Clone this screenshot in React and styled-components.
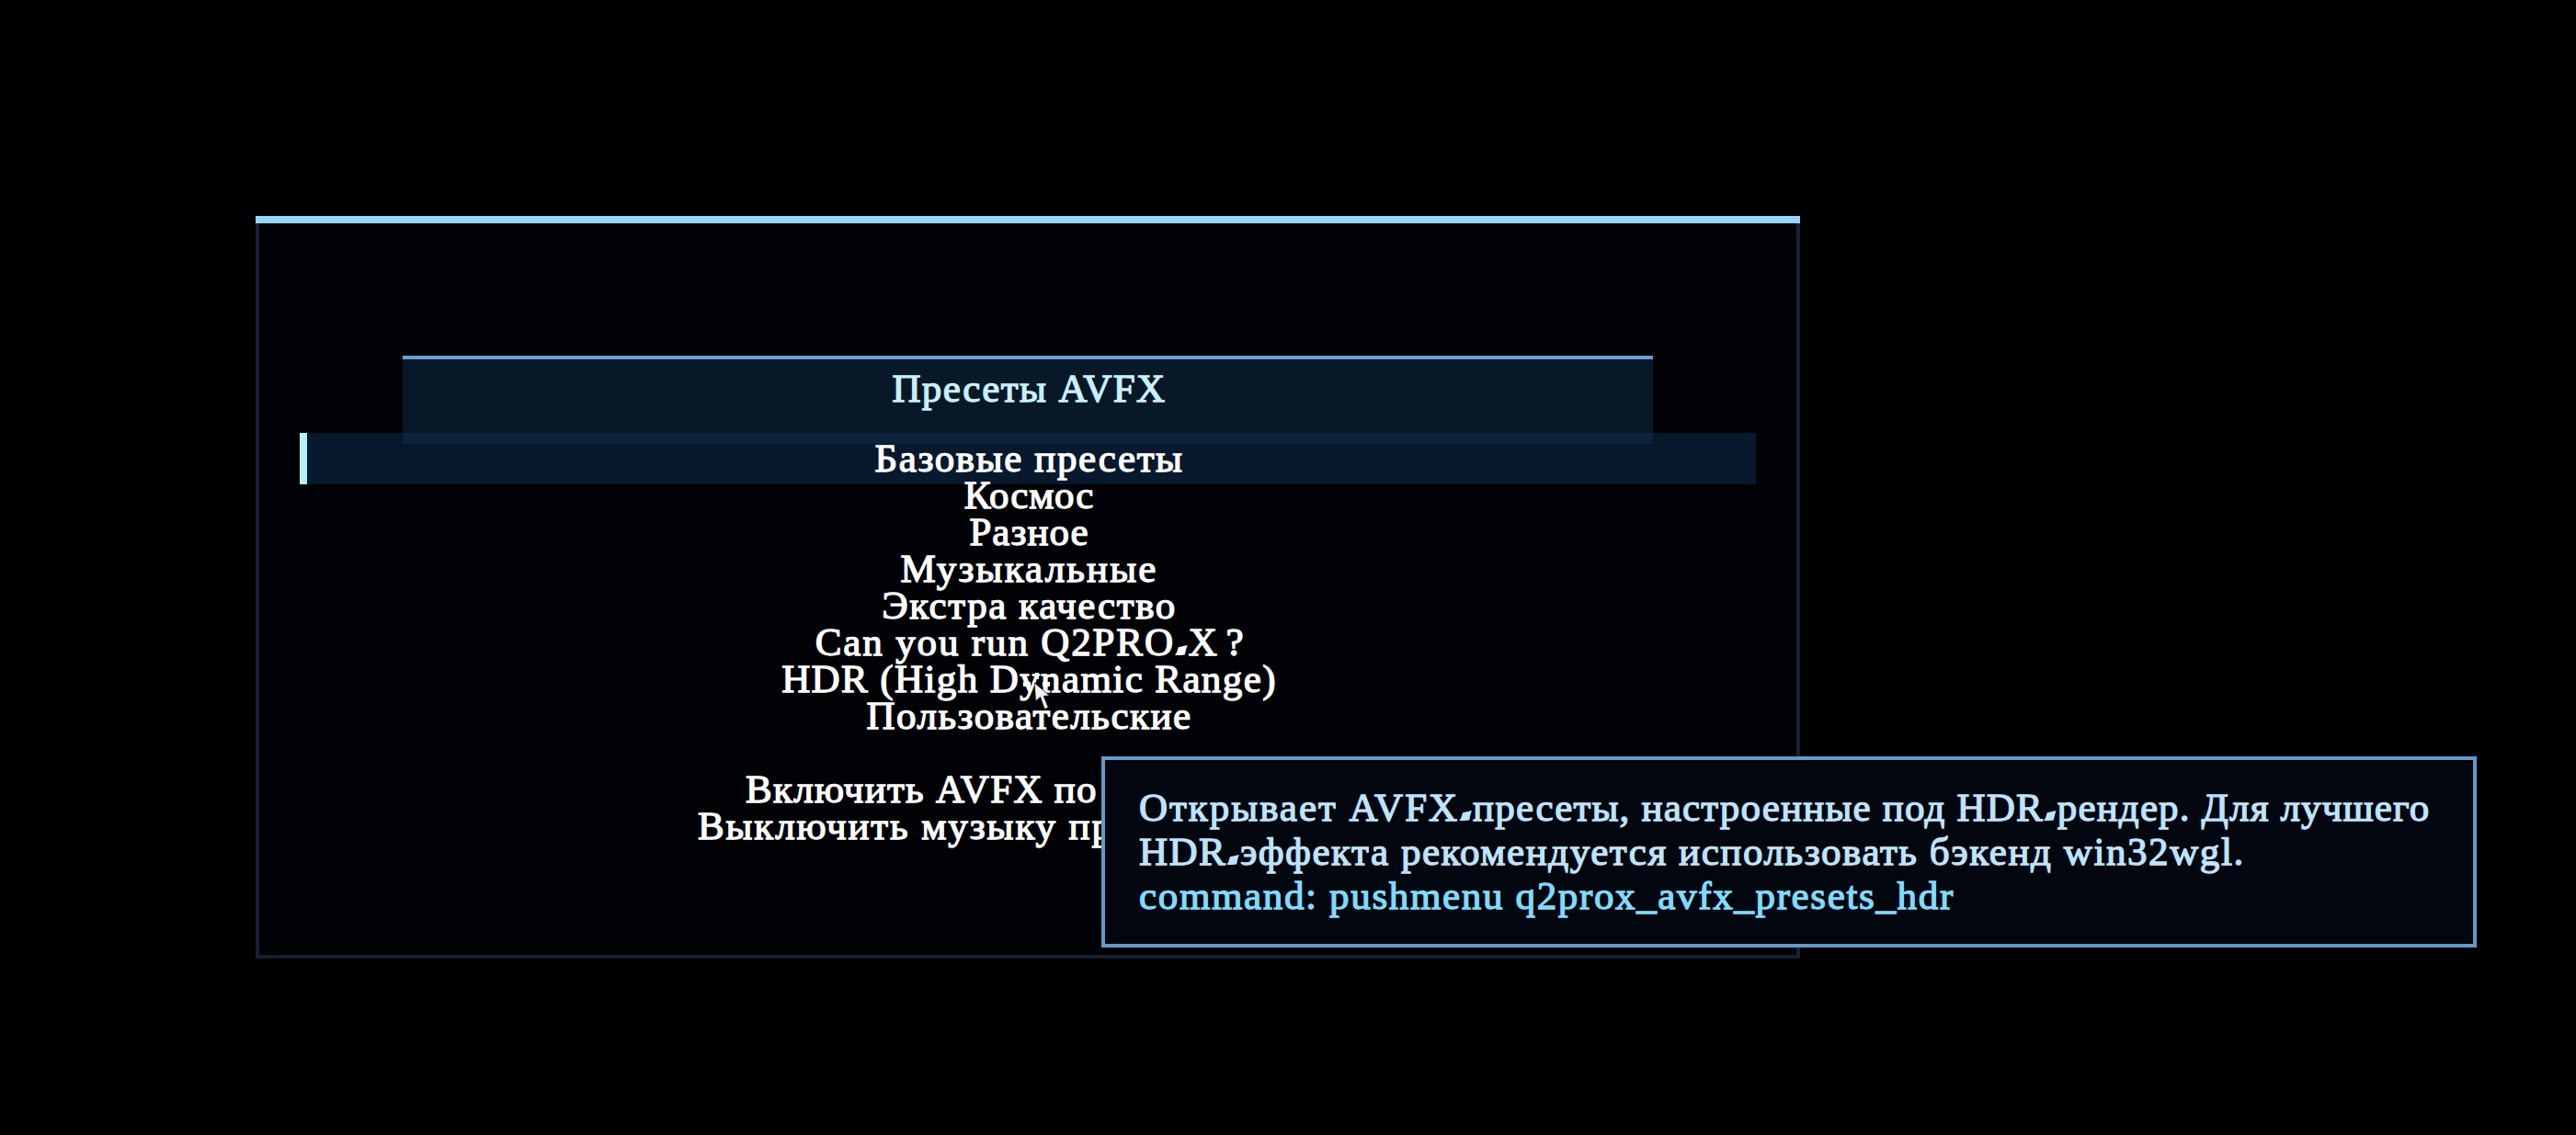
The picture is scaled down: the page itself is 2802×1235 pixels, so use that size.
import React from "react";
import styled, { createGlobalStyle, css } from "styled-components";

const GlobalStyle = createGlobalStyle`
  * {
    box-sizing: border-box;
  }
  body {
    margin: 0;
    background: #000;
    overflow: hidden;
  }
`;

const Page = styled.div`
  position: relative;
  width: 2802px;
  height: 1235px;
  padding: 235px 0 0 278px;
  background: #000;
  font-family: "Liberation Serif", "Times New Roman", serif;
  font-size: 43px;
  line-height: 40px;
  white-space: pre;
  -webkit-text-stroke: 1.3px currentColor;
`;

const Panel = styled.main`
  width: 1680px;
  border-top: 8px solid #97d3ff;
`;

const PanelBody = styled.div`
  display: flex;
  flex-direction: column;
  height: 800px;
  padding: 144px 44px 0;
  border: 4px solid #142239;
  border-top: 0;
  border-bottom-color: #14212f;
  background: #010206;
`;

const Header = styled.header`
  align-self: center;
  width: 1360px;
  height: 96px;
  margin-bottom: -12px;
  padding: 12px 0 0 3px;
  border-top: 4px solid #6a9fd0;
  background: #091826;
  color: #c8f0ff;
  text-align: center;
`;

const Menu = styled.ul`
  display: flex;
  flex-direction: column;
  margin: 0;
  padding: 8px 0 0;
  list-style: none;
  color: #fff;
`;

const Item = styled.li`
  display: flex;
  justify-content: center;
  height: 40px;
  padding-left: 3px;
  ${({ $selected }) =>
    $selected &&
    css`
      height: 56px;
      margin: -8px 0;
      padding: 8px 0 8px 3px;
      background: rgba(15, 46, 84, 0.5);
      box-shadow: inset 8px 0 #b8efff;
    `}
`;

const Label = styled.span`
  width: ${({ $width }) => ($width ? `${$width}px` : "auto")};
`;

const Text = styled.span`
  letter-spacing: ${({ $spacing }) => $spacing}px;
`;

// the menu font draws its hyphen as a slanted lozenge on the baseline
const HyphenBox = styled.span`
  display: inline-block;
  width: 14px;
  height: 11px;
  margin: 0 1px 0 0;
  overflow: hidden;
  background: currentColor;
  clip-path: polygon(0 96%, 14% 80%, 28% 20%, 100% 0, 92% 22%, 78% 94%, 30% 100%);
  line-height: 11px;
`;

const Hyphen = () => <HyphenBox>-</HyphenBox>;

const Tooltip = styled.aside`
  position: absolute;
  left: 1198px;
  top: 823px;
  width: 1496px;
  height: 208px;
  padding: 28px 37px;
  border: 4px solid #6499c8;
  background: #02060e;
  color: #bfe3ff;
  line-height: 48px;
`;

const TooltipLine = styled.div`
  height: 48px;
`;

const Command = styled(TooltipLine)`
  color: #80dbff;
`;

const Pointer = styled.svg`
  position: absolute;
  left: 1112px;
  top: 729px;
`;

const items = [
  { text: "Базовые пресеты", spacing: 1.6, selected: true },
  { text: "Космос", spacing: 0.7 },
  { text: "Разное", spacing: 1 },
  { text: "Музыкальные", spacing: 2.15 },
  { text: "Экстра качество", spacing: 1.6 },
  { text: "Can you run Q2PRO", spacing: 1.85, tail: "X ?", tailSpacing: -0.5 },
  { text: "HDR (High Dynamic Range)", spacing: 1.4 },
  { text: "Пользовательские", spacing: 1.5 },
  { text: "", spacing: 0 },
  { text: "Включить AVFX по", spacing: 1.3, width: 617 },
  { text: "Выключить музыку пр", spacing: 1.9, width: 721 },
];

const App = () => {
  return (
    <Page>
      <GlobalStyle />
      <Panel>
        <PanelBody>
          <Header>
            <Text $spacing={1.4}>Пресеты AVFX</Text>
          </Header>
          <Menu>
            {items.map((item, index) => (
              <Item key={index} $selected={item.selected}>
                <Label $width={item.width}>
                  <Text $spacing={item.spacing}>{item.text}</Text>
                  {item.tail && (
                    <>
                      <Hyphen />
                      <Text $spacing={item.tailSpacing}>{item.tail}</Text>
                    </>
                  )}
                </Label>
              </Item>
            ))}
          </Menu>
        </PanelBody>
      </Panel>

      <Tooltip>
        <TooltipLine>
          <Text $spacing={2}>Открывает AVFX</Text>
          <Hyphen />
          <Text $spacing={1.2}>пресеты, настроенные под HDR</Text>
          <Hyphen />
          <Text $spacing={1.15}>рендер. Для лучшего</Text>
        </TooltipLine>
        <TooltipLine>
          <Text $spacing={1.4}>HDR</Text>
          <Hyphen />
          <Text $spacing={1.58}>эффекта рекомендуется использовать бэкенд win32wgl.</Text>
        </TooltipLine>
        <Command>
          <Text $spacing={1.65}>command: pushmenu q2prox_avfx_presets_hdr</Text>
        </Command>
      </Tooltip>

      <Pointer width="32" height="46" viewBox="0 0 32 46">
        <path d="M14 3h4v7h-4zM1 13h8v5H1zM22 13h8v5h-8z" fill="#fff" />
        <path
          d="M13.2 14 14.6 33.8l5-4.4 4.6 13 4-1.6-5-12.4 6.2-.6z"
          fill="#eef0f2"
          stroke="#010206"
          strokeWidth="0.6"
        />
      </Pointer>
    </Page>
  );
};

export default App;
